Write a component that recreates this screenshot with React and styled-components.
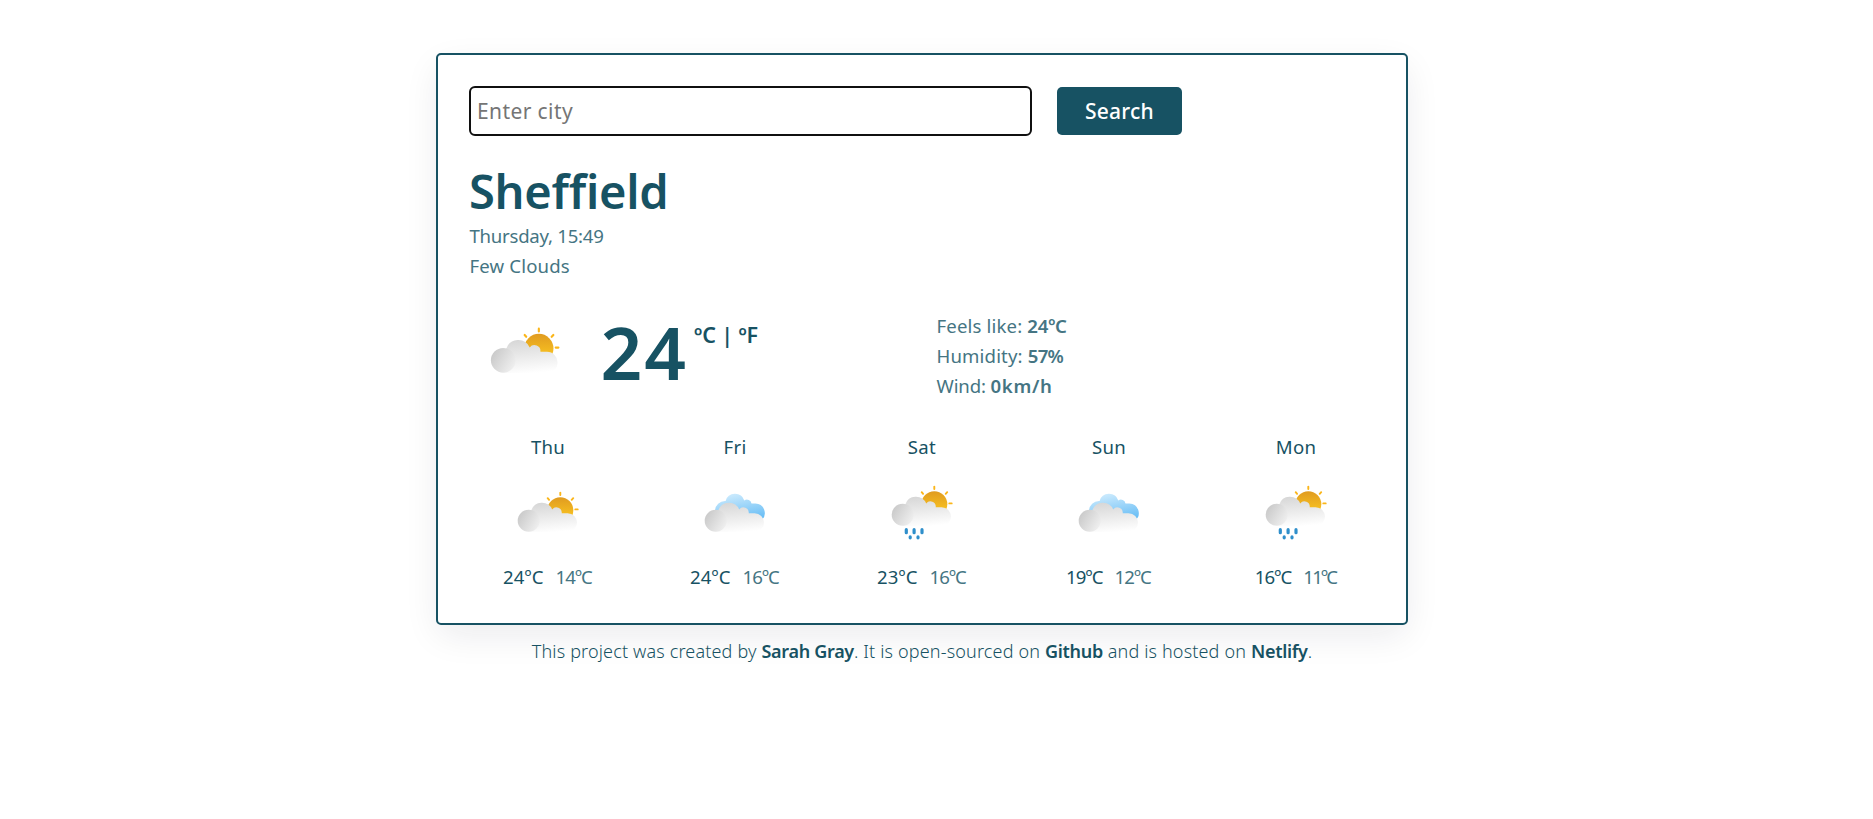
import React, { useId } from "react";
import styled, { createGlobalStyle } from "styled-components";

const GlobalStyle = createGlobalStyle`
  * { box-sizing: border-box; }
  body {
    margin: 0;
    background: #fff;
    color: #175263;
    font-family: "Noto Sans", "Open Sans", sans-serif;
  }
`;

const Page = styled.div`
  display: flex;
  flex-direction: column;
  align-items: center;
  padding: 53px 29px 0 0;
`;

const Card = styled.main`
  width: 972px;
  padding: 32px 32px 31px;
  border: 2px solid #175263;
  border-radius: 5px;
  background: #fff;
  box-shadow: rgba(20, 20, 45, 0.09) 0 12px 36px -3px;
`;

const SearchForm = styled.form`
  display: flex;
  align-items: center;
  gap: 25px;
  margin: -1px 0 -1px -1px;
`;

const CityInput = styled.input`
  width: 563px;
  height: 50px;
  padding: 0 6px 1px;
  border: 2px solid #101010;
  border-radius: 6px;
  outline: none;
  font: 400 21px "Noto Sans", sans-serif;
  letter-spacing: 0.4px;
  &::placeholder { color: #757575; opacity: 1; }
`;

const SearchButton = styled.button`
  width: 125px;
  height: 48px;
  padding: 0 0 1px;
  border: 0;
  border-radius: 5px;
  background: #175263;
  color: #fff;
  font: 500 21px "Noto Sans", sans-serif;
  letter-spacing: 0.2px;
`;

const City = styled.h1`
  margin: 28px 0 2px -1px;
  font-size: 47px;
  font-weight: 600;
  line-height: 56px;
  letter-spacing: -0.25px;
`;

const Detail = styled.div`
  margin-left: -0.5px;
  color: #457583;
  font-size: 18.6px;
  line-height: 30px;
  letter-spacing: ${(p) => p.$spacing || "0.15px"};
`;

const DetailValue = styled.strong`
  font-weight: 600;
  letter-spacing: ${(p) => p.$spacing || "-0.2px"};
`;

const Current = styled.section`
  display: grid;
  grid-template-columns: 467px 1fr;
  height: 90px;
  margin-top: 30px;
`;

const Reading = styled.div`
  display: flex;
  align-items: flex-start;
  margin: -1px 0 0 10px;
`;

const Temperature = styled.div`
  margin: -3px 6px 0 30.5px;
  font-size: 73px;
  font-weight: 600;
  line-height: 90px;
  letter-spacing: 2px;
`;

const Units = styled.div`
  margin-top: 10px;
  font-size: 21.5px;
  font-weight: 600;
  line-height: 30px;
  letter-spacing: -0.1px;
`;

const Forecast = styled.section`
  display: grid;
  grid-template-columns: repeat(5, 187px);
  margin: 31px 0 0 -15.5px;
`;

const Day = styled.article`
  display: flex;
  flex-direction: column;
  align-items: center;
  font-size: 18.6px;
  line-height: 30px;
`;

const DayName = styled.div`
  margin-bottom: 14px;
  letter-spacing: 0.3px;
`;

const Range = styled.div`
  display: flex;
  gap: 12px;
  margin: 6px 1px 0 0;
`;

const Degrees = styled.span`
  color: ${(p) => (p.$muted ? "#457583" : "#175263")};
  letter-spacing: ${(p) => (p.$narrow ? -0.9 * p.$narrow : 0.1)}px;
`;

const Footer = styled.footer`
  margin-top: 11px;
  font-size: 18px;
  font-weight: 350;
  line-height: 30px;
  letter-spacing: 0.16px;
  white-space: nowrap;
`;

const FooterLink = styled.a`
  font-weight: 600;
  letter-spacing: -0.3px;
`;

const IconSvg = styled.svg`
  display: block;
  flex: none;
  width: ${(p) => p.$size}px;
  height: ${(p) => p.$size}px;
`;

function WeatherIcon({ kind, size = 80 }) {
  const id = useId();
  const ref = (name) => `url(#${id}${name})`;
  const sunny = kind !== "cloudy";
  return (
    <IconSvg $size={size} viewBox="0 -0.4 80 80" aria-hidden="true">
      <defs>
        <linearGradient id={id + "sun"} x1="0" y1="0" x2="0" y2="1">
          <stop offset="0" stopColor="#e09b20" />
          <stop offset="0.75" stopColor="#f8c221" />
        </linearGradient>
        <linearGradient id={id + "sky"} gradientUnits="userSpaceOnUse" x1="40" y1="17" x2="46" y2="46">
          <stop offset="0" stopColor="#cbeafd" />
          <stop offset="1" stopColor="#67bdf5" />
        </linearGradient>
        <linearGradient id={id + "cloud"} gradientUnits="userSpaceOnUse" x1="41" y1="25" x2="44" y2="56">
          <stop offset="0" stopColor="#d6d6d6" />
          <stop offset="1" stopColor="#ffffff" />
        </linearGradient>
        <linearGradient id={id + "ball"} x1="0.05" y1="0.2" x2="0.95" y2="0.75">
          <stop offset="0" stopColor="#c9c9c9" />
          <stop offset="1" stopColor="#efefef" />
        </linearGradient>
      </defs>
      <g transform={kind === "rain" ? "translate(0 -6)" : undefined}>
        {sunny ? (
          <>
            <circle cx="52.3" cy="33.8" r="13" fill={ref("sun")} />
            <path
              d="M52.3 16.2v2.4M67.3 33h2.4M63.7 23.4l1.5-1.6M41.1 23.4l-1.4-1.6"
              stroke="#fbb61a"
              strokeWidth="1.9"
              strokeLinecap="round"
            />
          </>
        ) : (
          <path
            d="M20 34.5A10 10 0 0 1 30.6 24.6A9.8 9.8 0 0 1 49.3 24A4.6 4.6 0 0 1 56.5 27H60.4A9.6 9.6 0 0 1 66 44.2L40 48H26Z"
            fill={ref("sky")}
          />
        )}
        <path
          d="M20.7 55.6V44A11 11 0 0 1 23.3 34A11.2 11.2 0 0 1 44.2 33A5.3 5.3 0 0 1 53.7 36.8H59.6A9.4 9.4 0 0 1 59.6 55.6Z"
          fill={ref("cloud")}
        />
        <circle cx="20.7" cy="44.3" r="11" fill={ref("ball")} />
      </g>
      {kind === "rain" && (
        <path
          d="M24.3 53.3v3M32.1 53.3v3M40 53.3v3M28.2 60.5v0.9M36 60.5v0.9"
          stroke="#2f8fcb"
          strokeWidth="3.2"
          strokeLinecap="round"
        />
      )}
    </IconSvg>
  );
}

const days = [
  { name: "Thu", kind: "sun", high: 24, low: 14 },
  { name: "Fri", kind: "cloudy", high: 24, low: 16 },
  { name: "Sat", kind: "rain", high: 23, low: 16 },
  { name: "Sun", kind: "cloudy", high: 19, low: 12 },
  { name: "Mon", kind: "rain", high: 16, low: 11 },
];

// The digit 1 is narrow, so values that hold it are set tighter.
const countOnes = (value) => String(value).split("1").length - 1;

export default function App() {
  return (
    <>
      <GlobalStyle />
      <Page>
        <Card>
          <SearchForm>
            <CityInput placeholder="Enter city" />
            <SearchButton type="button">Search</SearchButton>
          </SearchForm>
          <City>Sheffield</City>
          <Detail $spacing="-0.25px">Thursday, 15:49</Detail>
          <Detail>Few Clouds</Detail>
          <Current>
            <Reading>
              <WeatherIcon kind="sun" size={90} />
              <Temperature>24</Temperature>
              <Units>ºC | ºF</Units>
            </Reading>
            <div>
              <Detail>Feels like: <DetailValue>24ºC</DetailValue></Detail>
              <Detail>Humidity: <DetailValue $spacing="-0.7px">57%</DetailValue></Detail>
              <Detail $spacing="-0.15px">Wind: <DetailValue $spacing="0.7px">0km/h</DetailValue></Detail>
            </div>
          </Current>
          <Forecast>
            {days.map((d) => (
              <Day key={d.name}>
                <DayName>{d.name}</DayName>
                <WeatherIcon kind={d.kind} />
                <Range>
                  <Degrees $narrow={countOnes(d.high)}>{d.high}ºC</Degrees>
                  <Degrees $muted $narrow={countOnes(d.low)}>{d.low}ºC</Degrees>
                </Range>
              </Day>
            ))}
          </Forecast>
        </Card>
        <Footer>
          This project was created by <FooterLink>Sarah Gray</FooterLink>. It is open-sourced on{" "}
          <FooterLink>Github</FooterLink> and is hosted on <FooterLink>Netlify</FooterLink>.
        </Footer>
      </Page>
    </>
  );
}
